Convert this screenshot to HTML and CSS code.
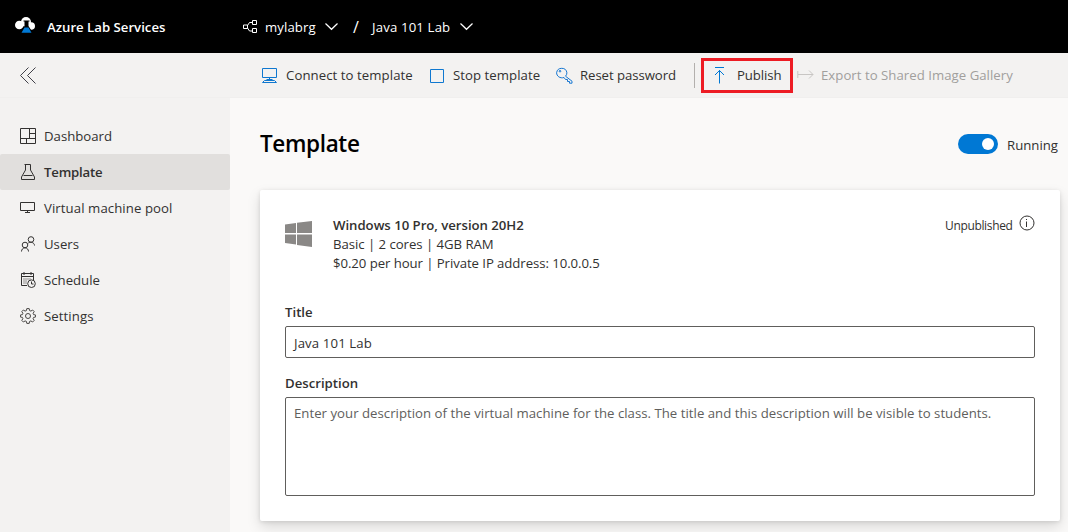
FILE: index.html
```html
<!DOCTYPE html>
<html lang="en">
<head>
<meta charset="utf-8">
<title>Azure Lab Services</title>
<link rel="stylesheet" href="styles.css">
</head>
<body>
<header class="topbar">
  <svg class="logo" width="20" height="16" viewBox="0 0 20 16"><g fill="#fff"><circle cx="4.300" cy="8" r="4.300"/><circle cx="11" cy="5" r="5"/><circle cx="16.200" cy="9" r="3.800"/></g><path d="M8.500 3.500h6v1h-1V9l4.500 7H5.500l4-7V4.500h-1z" fill="#000"/><path d="M9.500 10.500h4l3 5.200H6.500z" fill="#0078d4"/></svg>
  <span class="brand">Azure Lab Services</span>
  <div class="crumb group">
    <svg width="16" height="16" viewBox="0 0 16 16" fill="none" stroke="#fff"><path d="M.5 6h4v3.500h-4zM9.500 1.500h4v4h-4zM9.500 9.500h4v4h-4zM4.500 6.500l2-3h3M4.500 9l2 3h3"/></svg>
    <span class="crumb-name rg">mylabrg</span>
    <svg width="13" height="8" viewBox="0 0 13 8" fill="none" stroke="#fff" stroke-width="1.200"><path d="M.5.5l6 5.800L12.500.5"/></svg>
  </div>
  <span class="slash">/</span>
  <div class="crumb lab">
    <span class="crumb-name labname">Java 101 Lab</span>
    <svg width="13" height="8" viewBox="0 0 13 8" fill="none" stroke="#fff" stroke-width="1.200"><path d="M.5.5l6 5.800L12.500.5"/></svg>
  </div>
</header>
<div class="commands">
  <div class="collapse"><svg width="17" height="17" viewBox="0 0 17 17" fill="none" stroke="#404048"><path d="M8.500.5l-8 8 8 8M15.500.5l-8 8 8 8"/></svg></div>
  <div class="cmd connect">
    <svg width="17" height="17" viewBox="0 0 17 17" fill="none" stroke="#0f78d0"><path d="M1.500 1.500h14v9h-14zM8.500 10.500v2M5.500 12.500h6M3.500 13.500l-2 2h14l-2-2z"/></svg><span>Connect to template</span>
  </div>
  <div class="cmd stop">
    <svg width="16" height="17" viewBox="0 0 16 17" fill="none" stroke="#0f78d0"><path d="M1.500 2.500h13v13h-13z"/></svg><span>Stop template</span>
  </div>
  <div class="cmd reset">
    <svg width="17" height="17" viewBox="0 0 17 17" fill="none" stroke="#1677d2"><path d="M9.500 9.200l6.500 5v2h-2.500v-1.700h-2v-2H9.500L8 10.500C4 11.800.6 9 .6 5.800A5.200 5.200 0 0 1 10.900 5.800c0 1.400-.5 2.500-1.400 3.400z"/><circle cx="4" cy="4.200" r=".8"/></svg><span>Reset password</span>
  </div>
  <div class="divider"></div>
  <div class="cmd publish">
    <svg width="12" height="17" viewBox="0 0 12 17" fill="none" stroke="#0078d4"><path d="M1 .5h9M5.500 3v13.500M1 8l4.500-4.500L10 8"/></svg><span>Publish</span>
  </div>
  <div class="cmd export">
    <svg width="18" height="11" viewBox="0 0 18 11" fill="none" stroke="#c8c6c4"><path d="M.8 1v7M1 4.500h15M12 .5l4 4-4 4"/></svg><span>Export to Shared Image Gallery</span>
  </div>
</div>
<div class="body">
  <nav class="side">
    <a class="item"><svg width="16" height="16" viewBox="0 0 16 16" fill="none" stroke="#323130"><path d="M.5.5h15v15H.5zM9.500.5v10M9.500 5.500h6M.5 10.500h15M6.500 10.500v5"/></svg><span>Dashboard</span></a>
    <a class="item active"><svg width="16" height="16" viewBox="0 0 16 16" fill="none" stroke="#323130"><path d="M4.500.5h6M5.500.5v5.500L1.500 13v2.500h13V13l-4-7V.5M3.500 11.500h9"/></svg><span>Template</span></a>
    <a class="item"><svg width="16" height="16" viewBox="0 0 16 16" fill="none" stroke="#323130"><path d="M.5 2.500h14v8H.5zM7.500 10.500v2M5 12.500h5"/></svg><span class="wide">Virtual machine pool</span></a>
    <a class="item"><svg width="16" height="16" viewBox="0 0 16 16" fill="none" stroke="#323130"><circle cx="11" cy="3.500" r="2.800"/><circle cx="5" cy="9" r="2.800"/><path d="M1.500 15.500c0-2 1.500-3.700 3.500-3.700s3.500 1.700 3.500 3.700M8.300 7c2.500-1.700 6.200-.3 6.200 2.500"/></svg><span>Users</span></a>
    <a class="item"><svg width="16" height="16" viewBox="0 0 16 16" fill="none" stroke="#323130"><path d="M7 13.500H1.500v-12h12V8M1.500 4.500h12M4 0v3M11 0v3"/><path d="M3.500 7h8M3.500 9h4M3.500 11h3" stroke-dasharray="1 1"/><circle cx="11.500" cy="11.700" r="3.800" fill="#f3f2f1"/><path d="M11.500 9.500v2.500h2"/></svg><span>Schedule</span></a>
    <a class="item"><svg width="16" height="16" viewBox="0 0 16 16" fill="none" stroke="#484644"><circle cx="8" cy="8" r="2.500"/><path d="M6.800.6h2.400l.4 2 1.300.5 1.700-1.100 1.600 1.600-1.100 1.700.5 1.300 2 .4v2l-2 .4-.5 1.300 1.100 1.700-1.600 1.600-1.700-1.100-1.300.5-.4 2H6.800l-.4-2-1.300-.5-1.700 1.100-1.600-1.600 1.100-1.700-.5-1.300-2-.4V7l2-.4.5-1.300-1.100-1.700L3.400 2l1.700 1.100 1.300-.5z"/></svg><span class="wide">Settings</span></a>
  </nav>
  <main class="main">
    <div class="heading"><h1>Template</h1><div class="state"><span class="toggle"><i></i></span><span class="running">Running</span></div></div>
    <section class="card">
      <div class="info">
        <svg class="win" width="28" height="28" viewBox="0 0 28 28" fill="#8a8886"><path d="M0 4.600L11 3v10H0zM12 2.800L27 1v12H12zM0 14.500h11v10L0 23zM12 14.500h15V27l-15-1.900z"/></svg>
        <div class="specs"><strong class="os">Windows 10 Pro, version 20H2</strong><span class="size">Basic | 2 cores | 4GB RAM</span><span class="price">$0.20 per hour | Private IP address: 10.0.0.5</span></div>
        <div class="status"><span>Unpublished</span><svg width="16" height="16" viewBox="0 0 16 16" fill="none" stroke="#323130"><circle cx="8" cy="8" r="7"/><path d="M7.500 6.500V12M7.500 4v1"/></svg></div>
      </div>
      <label class="lbl title-l">Title</label>
      <div class="field"><span class="val">Java 101 Lab</span></div>
      <label class="lbl desc-l">Description</label>
      <div class="field area"><span class="ph">Enter your description of the virtual machine for the class. The title and this description will be visible to students.</span></div>
    </section>
  </main>
</div>
</body>
</html>
```
FILE: styles.css
```css
* { box-sizing: border-box; }
body { margin: 0; width: 1068px; height: 532px; overflow: hidden; background: #faf9f8; color: #323130; font: 13.2px/20px "Segoe UI", "Open Sans", "Noto Sans", sans-serif; white-space: nowrap; }
svg { display: block; flex: none; }
.topbar { height: 53px; background: #000; color: #fff; display: flex; align-items: center; padding: 0 0 0 15px; }
.logo { margin-top: -4px; }
.brand { width: 196px; margin-left: 12px; font-weight: 600; }
.crumb { display: flex; align-items: center; }
.group { width: 110px; }
.group svg:first-child { margin-right: 6px; }
.crumb-name { font-weight: 500; }
.rg { width: 60px; letter-spacing: .08px; }
.slash { width: 19px; font-size: 16px; }
.labname { width: 88px; letter-spacing: .15px; }
.commands { height: 45px; background: #f3f2f1; border-bottom: 1px solid #f0efee; display: flex; align-items: center; }
.collapse { width: 261px; padding-left: 20px; }
.cmd { display: flex; align-items: center; }
.cmd span { margin-top: -1px; }
.connect { width: 168px; gap: 8px; letter-spacing: .07px; }
.stop { width: 127px; gap: 8px; letter-spacing: .05px; }
.reset { width: 138px; gap: 7px; letter-spacing: -.07px; }
.divider { width: 1px; height: 25px; background: #b3b0ad; }
.publish { width: 92px; height: 35px; margin-left: 6px; padding-left: 10px; gap: 11px; border: 3px solid #ed1c24; letter-spacing: -.1px; }
.export { margin-left: 4px; gap: 6px; color: #a19f9d; letter-spacing: .03px; }
.body { height: 434px; display: flex; }
.side { width: 230px; background: #f3f2f1; padding-top: 20px; }
.item { height: 36px; display: flex; align-items: center; gap: 8px; padding-left: 20px; }
.active { background: #e1dfdd; border-radius: 2px; font-weight: 600; letter-spacing: -.2px; }
.wide { letter-spacing: .08px; }
.main { width: 838px; padding: 0 8px 0 30px; }
.heading { height: 92px; display: flex; justify-content: space-between; }
h1 { margin: 30px 0 0; font-size: 22.500px; line-height: 32px; font-weight: 600; color: #000; letter-spacing: -.35px; }
.state { display: flex; align-items: center; height: 20px; width: 102px; margin: 36px 0 0; gap: 9px; }
.toggle { width: 40px; height: 20px; flex: none; border-radius: 10px; background: #0078d4; display: flex; align-items: center; justify-content: flex-end; padding-right: 4px; }
.toggle i { width: 12px; height: 12px; border-radius: 50%; background: #fff; }
.running { margin-top: 2px; }
.card { height: 331px; padding: 25px; background: #fff; border-radius: 2px; box-shadow: 0 6px 14px rgba(0,0,0,.13), 0 1px 4px rgba(0,0,0,.11); }
.info { display: flex; height: 87px; }
.win { margin: 5px 20px 0 0; }
.specs { display: flex; flex-direction: column; line-height: 19px; flex: 1; padding-top: 1px; }
.os { font-weight: 600; letter-spacing: -.03px; }
.size { letter-spacing: -.04px; }
.price { letter-spacing: -.07px; }
.status { display: flex; width: 90px; font-size: 12px; line-height: 22px; justify-content: space-between; letter-spacing: -.35px; }
.lbl { display: block; height: 24px; font-weight: 600; }
.field { height: 32px; border: 1px solid #605e5c; border-radius: 2px; padding: 6px 8px; width: 750px; display: flex; color: #323130; }
.val { letter-spacing: .12px; }
.desc-l { margin-top: 15px; }
.area { height: 99px; padding-top: 5px; }
.ph { color: #605e5c; letter-spacing: .022px; }
```
